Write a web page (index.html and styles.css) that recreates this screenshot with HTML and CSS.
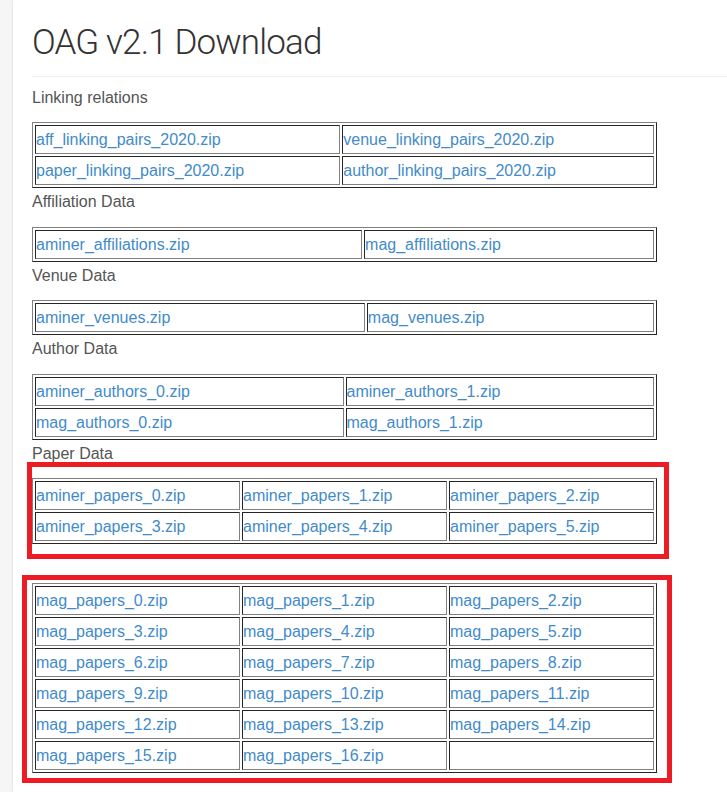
FILE: index.html
```html
<!DOCTYPE html>
<html lang="en">
<head>
<meta charset="utf-8">
<title>OAG v2.1 Download</title>
<link rel="stylesheet" href="styles.css">
</head>
<body>
<div class="page">
  <header class="head">
    <h1 class="title">OAG v2.1 Download</h1>
  </header>

  <p class="label first">Linking relations</p>
  <table class="files">
    <tr><td><a href="#">aff_linking_pairs_2020.zip</a></td><td><a href="#">venue_linking_pairs_2020.zip</a></td></tr>
    <tr><td><a href="#">paper_linking_pairs_2020.zip</a></td><td><a href="#">author_linking_pairs_2020.zip</a></td></tr>
  </table>

  <p class="label">Affiliation Data</p>
  <table class="files">
    <tr><td><a href="#">aminer_affiliations.zip</a></td><td><a href="#">mag_affiliations.zip</a></td></tr>
  </table>

  <p class="label">Venue Data</p>
  <table class="files">
    <tr><td><a href="#">aminer_venues.zip</a></td><td><a href="#">mag_venues.zip</a></td></tr>
  </table>

  <p class="label">Author Data</p>
  <table class="files">
    <tr><td><a href="#">aminer_authors_0.zip</a></td><td><a href="#">aminer_authors_1.zip</a></td></tr>
    <tr><td><a href="#">mag_authors_0.zip</a></td><td><a href="#">mag_authors_1.zip</a></td></tr>
  </table>

  <p class="label">Paper Data</p>
  <div class="marked mark-a">
    <table class="files">
      <tr><td><a href="#">aminer_papers_0.zip</a></td><td><a href="#">aminer_papers_1.zip</a></td><td><a href="#">aminer_papers_2.zip</a></td></tr>
      <tr><td><a href="#">aminer_papers_3.zip</a></td><td><a href="#">aminer_papers_4.zip</a></td><td><a href="#">aminer_papers_5.zip</a></td></tr>
    </table>
  </div>

  <p class="label">&nbsp;</p>
  <div class="marked mark-b">
    <table class="files">
      <tr><td><a href="#">mag_papers_0.zip</a></td><td><a href="#">mag_papers_1.zip</a></td><td><a href="#">mag_papers_2.zip</a></td></tr>
      <tr><td><a href="#">mag_papers_3.zip</a></td><td><a href="#">mag_papers_4.zip</a></td><td><a href="#">mag_papers_5.zip</a></td></tr>
      <tr><td><a href="#">mag_papers_6.zip</a></td><td><a href="#">mag_papers_7.zip</a></td><td><a href="#">mag_papers_8.zip</a></td></tr>
      <tr><td><a href="#">mag_papers_9.zip</a></td><td><a href="#">mag_papers_10.zip</a></td><td><a href="#">mag_papers_11.zip</a></td></tr>
      <tr><td><a href="#">mag_papers_12.zip</a></td><td><a href="#">mag_papers_13.zip</a></td><td><a href="#">mag_papers_14.zip</a></td></tr>
      <tr><td><a href="#">mag_papers_15.zip</a></td><td><a href="#">mag_papers_16.zip</a></td><td></td></tr>
    </table>
  </div>
</div>
</body>
</html>
```
FILE: styles.css
```css
html, body {
  margin: 0;
  padding: 0;
}

body {
  background: #f6f6f6;
  font-family: "Liberation Sans", Arial, sans-serif;
  font-size: 16px;
  color: #555;
}

.page {
  margin-left: 13px;
  padding-left: 19px;
  min-height: 792px;
  background: #fff;
  box-shadow: -1px 0 2px rgba(0, 0, 0, 0.07);
}

.head {
  border-bottom: 1px solid #eee;
  padding: 24px 0 14px;
}

.title {
  margin: 0;
  font-family: Roboto, "Open Sans", sans-serif;
  font-weight: 300;
  font-size: 35px;
  line-height: 38px;
  letter-spacing: -0.85px;
  color: #333;
}

.label {
  margin: 2px 0 13.6px;
  line-height: 23px;
  color: #555;
}

.label.first {
  margin-top: 8.5px;
}

.files {
  width: 625px;
  border-collapse: separate;
  border-spacing: 2px;
  border: 1px solid;
  border-color: #808080 #262626 #262626 #808080;
}

.files td {
  border: 1px solid;
  border-color: #262626 #808080 #808080 #262626;
  padding: 1px 1px 1px 0;
  line-height: 25px;
  font-size: 16px;
  white-space: nowrap;
}

.files a {
  color: #428bca;
  text-decoration: none;
}

.marked {
  position: relative;
  width: 625px;
}

.marked::after {
  content: "";
  position: absolute;
  border: 5px solid #ed1c24;
  pointer-events: none;
}

.mark-a::after {
  left: -5px;
  top: -16px;
  right: -12px;
  bottom: -15px;
}

.mark-b::after {
  left: -10px;
  top: -8px;
  right: -15px;
  bottom: -10px;
}
```
